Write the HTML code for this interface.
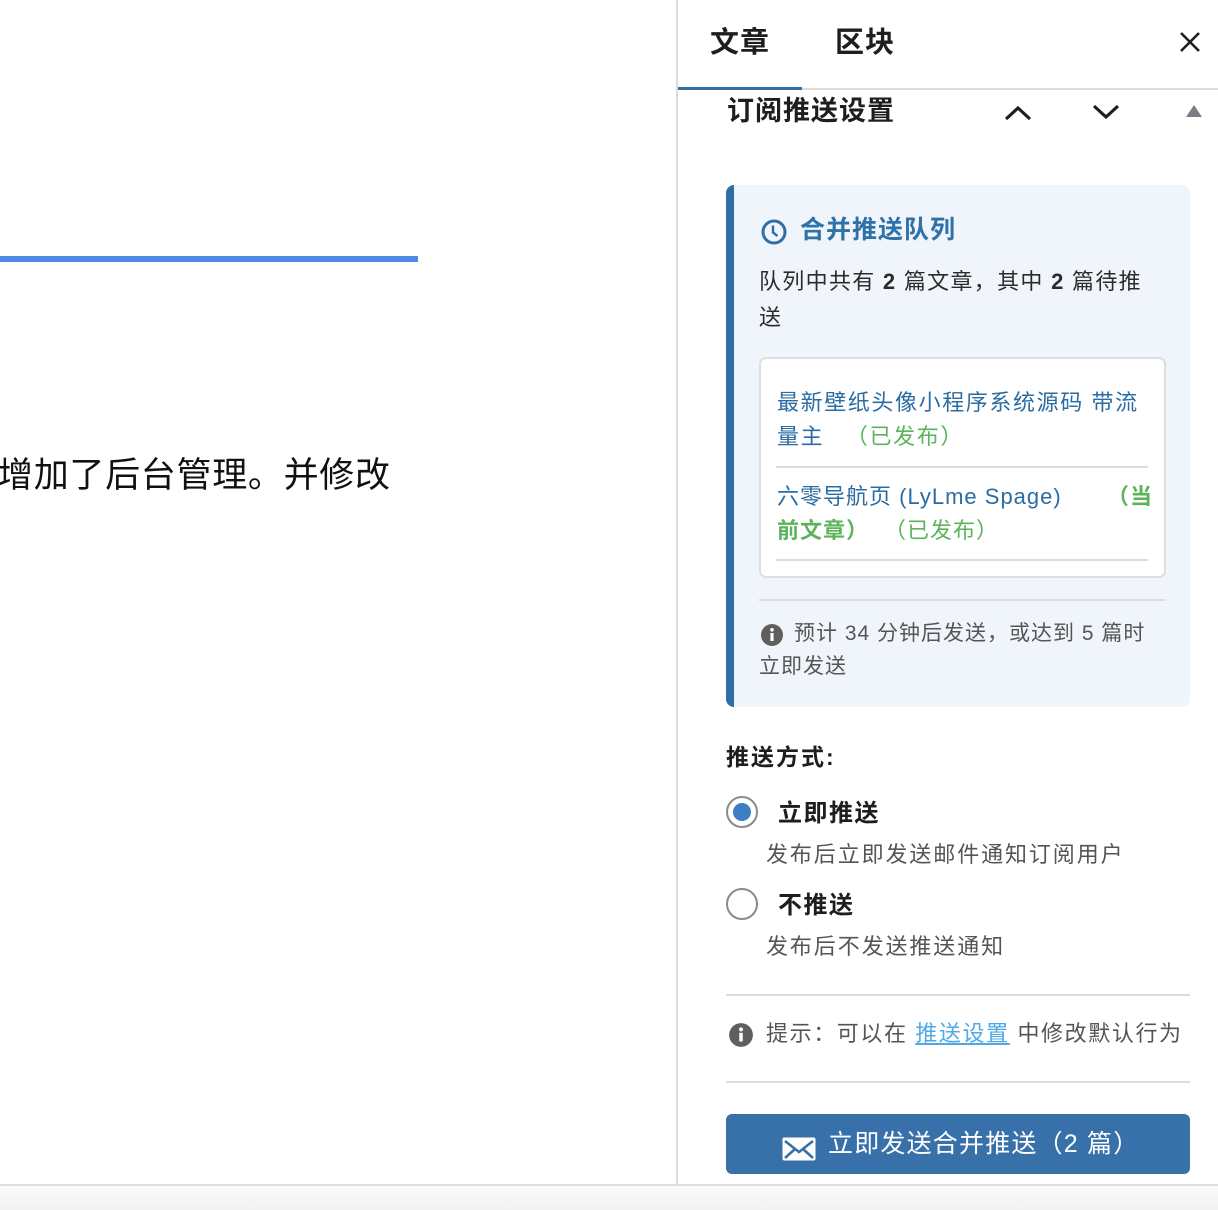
<!DOCTYPE html>
<html><head><meta charset="utf-8">
<style>
*{margin:0;padding:0;box-sizing:border-box}
body{width:1218px;height:1210px;position:relative;overflow:hidden;background:#fff;font-family:"Liberation Sans","Noto Sans CJK SC",sans-serif;color:#1e1e1e}
.a{position:absolute;white-space:nowrap}
.line{position:absolute;background:#dcdcdc}
</style></head><body>
<div class="a" style="left:0;top:256px;width:418px;height:6px;background:#4d8be6"></div>
<div class="a" style="left:-2px;top:454px;font-size:35px;line-height:44px;color:#111;letter-spacing:0.7px">增加了后台管理。并修改</div>
<div class="line" style="left:676px;top:0;width:2px;height:1185px"></div>

<div class="a" style="left:710px;top:23px;font-size:29px;line-height:40px;font-weight:bold;color:#1e1e1e;letter-spacing:1px">文章</div>
<div class="a" style="left:835px;top:23px;font-size:29px;line-height:40px;font-weight:bold;color:#1e1e1e;letter-spacing:1px">区块</div>
<svg class="a" style="left:1178px;top:30px" width="24" height="24" viewBox="0 0 24 24"><path d="M3 3L21 21M21 3L3 21" stroke="#1e1e1e" stroke-width="2.6"/></svg>
<div class="line" style="left:678px;top:88px;width:540px;height:2px"></div>
<div class="a" style="left:678px;top:87px;width:124px;height:3px;background:#2e6fa6"></div>

<div class="a" style="left:727px;top:93px;font-size:27px;line-height:36px;font-weight:bold;letter-spacing:1px">订阅推送设置</div>
<svg class="a" style="left:1003px;top:103px" width="30" height="20" viewBox="0 0 30 20"><path d="M3 16L15 5L27 16" fill="none" stroke="#1e1e1e" stroke-width="3.2"/></svg>
<svg class="a" style="left:1091px;top:102px" width="30" height="20" viewBox="0 0 30 20"><path d="M3 4L15 15L27 4" fill="none" stroke="#1e1e1e" stroke-width="3.2"/></svg>
<svg class="a" style="left:1185px;top:104px" width="18" height="14" viewBox="0 0 18 14"><path d="M1 13L9 1L17 13Z" fill="#7b7e84"/></svg>

<div class="a" style="left:726px;top:185px;width:464px;height:522px;background:#f0f5fc;border-left:8px solid #2e6fa5;border-radius:8px"></div>
<svg class="a" style="left:760px;top:218px" width="28" height="28" viewBox="0 0 28 28"><circle cx="14" cy="14" r="11" fill="none" stroke="#2e6fa5" stroke-width="3"/><path d="M13 7.5V14.5L17.5 18" fill="none" stroke="#2e6fa5" stroke-width="2.4"/></svg>
<div class="a" style="left:800px;top:213px;font-size:25px;line-height:34px;font-weight:bold;color:#2e72a8;letter-spacing:1px">合并推送队列</div>
<div class="a" style="left:759px;top:264px;font-size:22px;line-height:36px;color:#2b2b2b;letter-spacing:1.3px">队列中共有 <b>2</b> 篇文章，其中 <b>2</b> 篇待推<br>送</div>

<div class="a" style="left:759px;top:357px;width:407px;height:221px;background:#fff;border:2px solid #dedede;border-radius:7px"></div>
<div class="a" style="left:777px;top:386px;font-size:22px;line-height:34px;color:#2b6ca3;letter-spacing:1.6px">最新壁纸头像小程序系统源码 带流<br>量主 <span style="color:#5cb35c;margin-left:14px">（已发布）</span></div>
<div class="line" style="left:776px;top:466px;width:372px;height:2px"></div>
<div class="a" style="left:777px;top:480px;font-size:22px;line-height:34px;color:#2b6ca3;letter-spacing:1px">六零导航页 (LyLme Spage) <span style="color:#5cb35c;font-weight:bold;position:absolute;left:330px">（当</span><br><span style="color:#5cb35c;font-weight:bold">前文章）</span><span style="color:#5cb35c;margin-left:26px">（已发布）</span></div>
<div class="line" style="left:776px;top:559px;width:372px;height:2px"></div>

<div class="line" style="left:759px;top:599px;width:406px;height:2px"></div>
<svg class="a" style="left:760px;top:623px" width="24" height="24" viewBox="0 0 24 24"><circle cx="12" cy="12" r="11" fill="#5f5f5f"/><rect x="10.4" y="10" width="3.2" height="8" fill="#fff"/><circle cx="12" cy="6.8" r="1.8" fill="#fff"/></svg>
<div class="a" style="left:759px;top:617px;font-size:21px;line-height:33px;color:#555;letter-spacing:1px"><span style="margin-left:35px"></span>预计 34 分钟后发送，或达到 5 篇时<br>立即发送</div>

<div class="a" style="left:726px;top:741px;font-size:23px;line-height:32px;font-weight:bold;letter-spacing:2px">推送方式:</div>
<div class="a" style="left:726px;top:796px;width:32px;height:32px;border:2px solid #8a8a8e;border-radius:50%"></div>
<div class="a" style="left:733px;top:803px;width:18px;height:18px;background:#3d7fc4;border-radius:50%"></div>
<div class="a" style="left:778px;top:798px;font-size:24px;line-height:32px;font-weight:bold;letter-spacing:1.5px">立即推送</div>
<div class="a" style="left:766px;top:840px;font-size:22px;line-height:30px;color:#555;letter-spacing:1.9px">发布后立即发送邮件通知订阅用户</div>
<div class="a" style="left:726px;top:888px;width:32px;height:32px;border:2px solid #8a8a8e;border-radius:50%"></div>
<div class="a" style="left:778px;top:890px;font-size:24px;line-height:32px;font-weight:bold;letter-spacing:1.5px">不推送</div>
<div class="a" style="left:766px;top:932px;font-size:22px;line-height:30px;color:#555;letter-spacing:1.9px">发布后不发送推送通知</div>

<div class="line" style="left:726px;top:994px;width:464px;height:2px"></div>
<svg class="a" style="left:728px;top:1022px" width="26" height="26" viewBox="0 0 24 24"><circle cx="12" cy="12" r="11" fill="#5f5f5f"/><rect x="10.4" y="10" width="3.2" height="8" fill="#fff"/><circle cx="12" cy="6.8" r="1.8" fill="#fff"/></svg>
<div class="a" style="left:766px;top:1018px;font-size:22px;line-height:32px;color:#555;letter-spacing:1.6px">提示：可以在 <span style="color:#4fa9e6;text-decoration:underline">推送设置</span> 中修改默认行为</div>
<div class="line" style="left:726px;top:1081px;width:464px;height:2px"></div>

<div class="a" style="left:726px;top:1114px;width:464px;height:60px;background:#3870aa;border-radius:6px"></div>
<svg class="a" style="left:781px;top:1136px" width="36" height="26" viewBox="0 0 36 26"><rect x="1.5" y="1.5" width="33" height="23" rx="2" fill="#fff"/><path d="M4 5L18 16L32 5M4 22L14 13M32 22L22 13" fill="none" stroke="#3870aa" stroke-width="2.6"/></svg>
<div class="a" style="left:828px;top:1127px;font-size:25px;line-height:34px;color:#fff;letter-spacing:1.2px">立即发送合并推送（2 篇）</div>

<div class="a" style="left:0;top:1184px;width:1218px;height:26px;background:linear-gradient(#fafafa,#f2f2f2);border-top:2px solid #dedede"></div>
</body></html>
